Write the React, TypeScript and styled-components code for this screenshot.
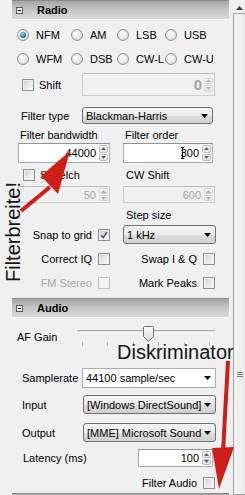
import styled, { createGlobalStyle } from "styled-components";

const GlobalStyle = createGlobalStyle`
  *, *::before, *::after { box-sizing: border-box; }
  html, body { margin: 0; padding: 0; background: #f0f0f0; overflow: hidden; }
  body {
    font-family: "Liberation Sans", Arial, sans-serif;
    font-size: 11px;
    color: #000;
  }
`

const Frame = styled.div`
  position: relative;
  display: flex;
  width: 245px;
  height: 495px;
  overflow: hidden;
  background: #f0f0f0;
`

const Panel = styled.div`
  flex: none;
  width: 229px;
  padding-left: 12px;
  display: flex;
  flex-direction: column;
`

const SectionHeader = styled.div<{ $mt?: number }>`
  flex: none;
  height: 20px;
  margin-top: ${p => p.$mt ?? 0}px;
  display: flex;
  align-items: center;
  gap: 14px;
  padding-left: 4px;
  border-top: 1px solid #8c8c8c;
  border-bottom: 1px solid #fafafa;
  background: linear-gradient(#a5a5a5, #c6c6c6 50%, #dadada);
  font-weight: bold;
`

const Collapse = styled.span`
  width: 7px;
  height: 7px;
  border: 1px solid #555;
  background: #f4f4f4;
  display: flex;
  align-items: center;
  justify-content: center;
  &::after {
    content: "";
    width: 3px;
    height: 1px;
    background: #000;
  }
`

const RadioGrid = styled.div`
  flex: none;
  display: grid;
  grid-template-columns: 54px 46px 48px auto;
  grid-auto-rows: 18px;
  row-gap: 6px;
  margin-top: 6px;
  padding-left: 5px;
`

const RadioItem = styled.span`
  display: flex;
  align-items: center;
  gap: 7px;
  white-space: nowrap;
`

const RadioDot = styled.span<{ $on?: boolean }>`
  flex: none;
  width: 12px;
  height: 12px;
  border-radius: 50%;
  border: 1px solid #8e8f8f;
  background: radial-gradient(circle at 40% 35%, #ffffff, #d6d6d6 85%);
  display: flex;
  align-items: center;
  justify-content: center;
  &::after {
    content: "";
    display: ${p => (p.$on ? "block" : "none")};
    width: 6px;
    height: 6px;
    border-radius: 50%;
    background: radial-gradient(circle at 40% 35%, #a6d6f2, #2d6e9b 60%, #17425f);
  }
`

const FormRow = styled.div<{ $mt: number; $h: number; $cols: string; $pl?: number }>`
  flex: none;
  display: grid;
  grid-template-columns: ${p => p.$cols};
  align-items: center;
  height: ${p => p.$h}px;
  margin-top: ${p => p.$mt}px;
  padding-left: ${p => p.$pl ?? 0}px;
`

const Label = styled.span<{ $pl?: number; $muted?: boolean; $top?: number }>`
  padding-left: ${p => p.$pl ?? 0}px;
  color: ${p => (p.$muted ? "#a7a7a7" : "#000")};
  white-space: nowrap;
  line-height: 14px;
  ${p => (p.$top !== undefined ? `align-self: start; margin-top: ${p.$top}px;` : "")}
`

const CheckLabel = styled.span<{ $end?: boolean; $pl?: number; $w?: number }>`
  display: flex;
  align-items: center;
  gap: ${p => (p.$end ? 6 : 5)}px;
  justify-content: ${p => (p.$end ? "flex-end" : "flex-start")};
  padding-left: ${p => p.$pl ?? 0}px;
  width: ${p => (p.$w ? `${p.$w}px` : "auto")};
  white-space: nowrap;
`

const CheckBox = styled.span<{ $disabled?: boolean }>`
  flex: none;
  width: 12px;
  height: 12px;
  border: 1px solid ${p => (p.$disabled ? "#c4c4c4" : "#8e8f8f")};
  box-shadow: inset 0 0 0 1px ${p => (p.$disabled ? "#f6f6f6" : "#f2f2f2")};
  background: ${p =>
    p.$disabled ? "#f4f4f4" : "linear-gradient(135deg, #cfcfcf, #f8f8f8 85%)"};
  display: flex;
  align-items: center;
  justify-content: center;
`

const SpinBox = styled.div<{ $w: number; $h: number; $disabled?: boolean }>`
  width: ${p => p.$w}px;
  height: ${p => p.$h}px;
  display: flex;
  align-items: center;
  padding: 1px;
  border: 1px solid ${p => (p.$disabled ? "#c9ccd0" : "#abadb3")};
  border-top-color: ${p => (p.$disabled ? "#babdc1" : "#8f949a")};
  background: ${p => (p.$disabled ? "#f0f0f0" : "#fff")};
`

const SpinText = styled.span<{ $disabled?: boolean; $big?: boolean }>`
  flex: 1;
  text-align: right;
  padding-right: ${p => (p.$big ? 2 : 3)}px;
  color: ${p => (p.$disabled ? "#a5a5a5" : "#000")};
  font-size: ${p => (p.$big ? 15 : 11)}px;
  font-weight: ${p => (p.$big ? "bold" : "normal")};
`

const Spinner = styled.div<{ $h?: number }>`
  flex: none;
  width: 9px;
  height: ${p => (p.$h ? `${p.$h}px` : "100%")};
  display: flex;
  flex-direction: column;
  gap: 1px;
`

const SpinBtn = styled.div<{ $disabled?: boolean }>`
  flex: 1;
  border: 1px solid ${p => (p.$disabled ? "#d6d6d6" : "#b9bcc1")};
  border-radius: 2px;
  background: linear-gradient(#fbfbfb, #e3e3e3);
  display: flex;
  align-items: center;
  justify-content: center;
`

const Select = styled.div<{ $w: number; $editable?: boolean }>`
  width: ${p => p.$w}px;
  height: 100%;
  display: flex;
  align-items: center;
  justify-content: space-between;
  padding: 0 4px 0 3px;
  border: 1px solid ${p => (p.$editable ? "#abadb3" : "#707070")};
  border-radius: ${p => (p.$editable ? 0 : 3)}px;
  background: ${p =>
    p.$editable
      ? "#fff"
      : "linear-gradient(#f3f3f3, #ebebeb 50%, #dddddd 51%, #d0d0d0)"};
  white-space: nowrap;
  overflow: hidden;
`

const SliderBox = styled.div`
  position: relative;
  width: 138px;
  height: 22px;
`

const SliderTrack = styled.div`
  margin-top: 5px;
  height: 3px;
  border-top: 1px solid #a9a9a9;
  border-bottom: 1px solid #ffffff;
  background: #e4e4e4;
`

const SliderThumb = styled.svg`
  position: absolute;
  left: 66px;
  top: 1px;
`

const Ticks = styled.div`
  display: flex;
  justify-content: space-between;
  margin-top: 9px;
  padding: 0 5px;
  span {
    width: 1px;
    height: 4px;
    background: #b8b8b8;
  }
`

const ScrollBar = styled.div`
  flex: none;
  width: 12px;
  margin-left: 4px;
  display: flex;
  flex-direction: column;
`

const ScrollUp = styled.div`
  flex: none;
  height: 13px;
  display: flex;
  align-items: center;
  justify-content: center;
  padding-top: 2px;
`

const ScrollThumb = styled.div`
  flex: 1;
  border: 1px solid #a0a0a0;
  border-right: none;
  border-radius: 2px 0 0 0;
  background: linear-gradient(90deg, #f6f6f6, #e9e9e9);
  padding-top: 358px;
  display: flex;
  justify-content: center;
`

const Overlay = styled.svg`
  position: absolute;
  inset: 0;
  pointer-events: none;
`

const Note = styled.span<{ $x: number; $y: number; $vertical?: boolean }>`
  position: absolute;
  left: ${p => p.$x}px;
  top: ${p => p.$y}px;
  font-size: 20px;
  line-height: 20px;
  color: #151515;
  white-space: nowrap;
  ${p => (p.$vertical ? "transform-origin: top left; transform: rotate(-90deg);" : "")}
`

const Arrow = ({ up, disabled }: { up?: boolean; disabled?: boolean }) => (
  <svg width="5" height="3" viewBox="0 0 5 3">
    <path d={up ? "M0 3 L2.5 0 L5 3 Z" : "M0 0 L5 0 L2.5 3 Z"} fill={disabled ? "#b4b4b4" : "#4b5f82"} />
  </svg>
)

const DropArrow = () => (
  <svg width="7" height="4" viewBox="0 0 7 4">
    <path d="M0 0 H7 L3.5 4 Z" fill="#000" />
  </svg>
)

const Check = ({ on, disabled }: { on?: boolean; disabled?: boolean }) => (
  <CheckBox $disabled={disabled}>
    {on && (
      <svg width="8" height="8" viewBox="0 0 8 8">
        <path d="M1 4.2 L3.2 6.5 L7 1" stroke="#3f5a96" strokeWidth="1.6" fill="none" />
      </svg>
    )}
  </CheckBox>
)

const Spin = ({ w, h, value, disabled, big }: { w: number; h: number; value: string; disabled?: boolean; big?: boolean }) => (
  <SpinBox $w={w} $h={h} $disabled={disabled}>
    <SpinText $disabled={disabled} $big={big}>{value}</SpinText>
    <Spinner $h={big ? 14 : undefined}>
      <SpinBtn $disabled={disabled}><Arrow up disabled={disabled} /></SpinBtn>
      <SpinBtn $disabled={disabled}><Arrow disabled={disabled} /></SpinBtn>
    </Spinner>
  </SpinBox>
)

const modes = ["NFM", "AM", "LSB", "USB", "WFM", "DSB", "CW-L", "CW-U"]

const App = () => {
  return (
    <Frame>
      <GlobalStyle />
      <Panel>
        <SectionHeader>
          <Collapse />
          Radio
        </SectionHeader>

        <RadioGrid>
          {modes.map(m => (
            <RadioItem key={m}>
              <RadioDot $on={m === "NFM"} />
              {m}
            </RadioItem>
          ))}
        </RadioGrid>

        <FormRow $mt={5} $h={23} $cols="70px 133px">
          <CheckLabel $pl={10}>
            <Check />
            Shift
          </CheckLabel>
          <Spin w={133} h={23} value="0" disabled big />
        </FormRow>

        <FormRow $mt={11} $h={17} $cols="70px 131px">
          <Label $pl={9}>Filter type</Label>
          <Select $w={131}>
            Blackman-Harris
            <DropArrow />
          </Select>
        </FormRow>

        <FormRow $mt={4} $h={14} $cols="105px 93px" $pl={6}>
          <Label $pl={2}>Filter bandwidth</Label>
          <Label $pl={2}>Filter order</Label>
        </FormRow>

        <FormRow $mt={1} $h={20} $cols="105px 93px" $pl={6}>
          <Spin w={92} h={20} value="44000" />
          <Spin w={90} h={20} value="300" />
        </FormRow>

        <FormRow $mt={5} $h={12} $cols="105px 93px" $pl={6}>
          <CheckLabel $pl={5}>
            <Check />
            Squelch
          </CheckLabel>
          <Label $pl={3}>CW Shift</Label>
        </FormRow>

        <FormRow $mt={6} $h={17} $cols="105px 93px" $pl={6}>
          <Spin w={92} h={17} value="50" disabled />
          <Spin w={92} h={17} value="600" disabled />
        </FormRow>

        <FormRow $mt={5} $h={14} $cols="105px 93px" $pl={6}>
          <span />
          <Label $pl={3}>Step size</Label>
        </FormRow>

        <FormRow $mt={3} $h={19} $cols="105px 93px" $pl={6}>
          <CheckLabel $end $w={92}>
            Snap to grid
            <Check on />
          </CheckLabel>
          <Select $w={93}>
            1 kHz
            <DropArrow />
          </Select>
        </FormRow>

        <FormRow $mt={8} $h={13} $cols="105px 93px" $pl={6}>
          <CheckLabel $end $w={92}>
            Correct IQ
            <Check />
          </CheckLabel>
          <CheckLabel $end $w={92}>
            Swap I &amp; Q
            <Check />
          </CheckLabel>
        </FormRow>

        <FormRow $mt={11} $h={13} $cols="105px 93px" $pl={6}>
          <CheckLabel $end $w={92}>
            <Label $muted>FM Stereo</Label>
            <Check disabled />
          </CheckLabel>
          <CheckLabel $end $w={92}>
            Mark Peaks
            <Check />
          </CheckLabel>
        </FormRow>

        <SectionHeader $mt={9}>
          <Collapse />
          Audio
        </SectionHeader>

        <FormRow $mt={7} $h={22} $cols="65px 138px">
          <Label $pl={5} $top={5}>AF Gain</Label>
          <SliderBox>
            <SliderTrack />
            <SliderThumb width="11" height="16" viewBox="0 0 11 16">
              <defs>
                <linearGradient id="thumbFill" x1="0" y1="0" x2="0" y2="1">
                  <stop offset="0" stopColor="#fafafa" />
                  <stop offset="1" stopColor="#d9d9d9" />
                </linearGradient>
              </defs>
              <path d="M0.5 1.5 Q0.5 0.5 1.5 0.5 H9.5 Q10.5 0.5 10.5 1.5 V10.5 L5.5 15.5 L0.5 10.5 Z" fill="url(#thumbFill)" stroke="#6f6f6f" />
            </SliderThumb>
            <Ticks>
              {[0, 1, 2, 3, 4, 5].map(i => <span key={i} />)}
            </Ticks>
          </SliderBox>
        </FormRow>

        <FormRow $mt={21} $h={20} $cols="70px 134px">
          <Label $pl={10}>Samplerate</Label>
          <Select $w={134} $editable>
            44100 sample/sec
            <DropArrow />
          </Select>
        </FormRow>

        <FormRow $mt={7} $h={19} $cols="71px 133px">
          <Label $pl={10}>Input</Label>
          <Select $w={133}>
            [Windows DirectSound]
            <DropArrow />
          </Select>
        </FormRow>

        <FormRow $mt={9} $h={19} $cols="71px 133px">
          <Label $pl={10}>Output</Label>
          <Select $w={133}>
            [MME] Microsoft Sound
            <DropArrow />
          </Select>
        </FormRow>

        <FormRow $mt={7} $h={18} $cols="126px 75px">
          <Label $pl={11}>Latency (ms)</Label>
          <Spin w={75} h={18} value="100" />
        </FormRow>

        <FormRow $mt={10} $h={12} $cols="203px">
          <CheckLabel $end>
            Filter Audio
            <Check />
          </CheckLabel>
        </FormRow>

        <SectionHeader $mt={4} />
      </Panel>

      <ScrollBar>
        <ScrollUp>
          <svg width="7" height="4" viewBox="0 0 7 4">
            <path d="M0 4 L3.5 0 L7 4 Z" fill="#3c3c3c" />
          </svg>
        </ScrollUp>
        <ScrollThumb>
          <svg width="6" height="6" viewBox="0 0 6 6">
            <path d="M0 0.5 H6 M0 2.5 H6 M0 4.5 H6" stroke="#7a7a7a" strokeWidth="1" />
          </svg>
        </ScrollThumb>
      </ScrollBar>

      <Note $x={117} $y={342}>Diskriminator</Note>
      <Note $x={3} $y={282} $vertical>Filterbreite!</Note>

      <Overlay width="245" height="495" viewBox="0 0 245 495">
        <path d="M181 147.5 H184 M182.5 147.5 V158.5 M181 158.5 H184" stroke="#000" strokeWidth="1" />
        <line x1="21" y1="211" x2="50" y2="187" stroke="#cf1d18" strokeWidth="4" />
        <polygon points="70,151 41,176 58,194" fill="#cf1d18" />
        <line x1="228" y1="361" x2="223" y2="452" stroke="#cf1d18" strokeWidth="4" />
        <polygon points="212,448 234,447 219,489" fill="#cf1d18" />
      </Overlay>
    </Frame>
  )
}

export default App
